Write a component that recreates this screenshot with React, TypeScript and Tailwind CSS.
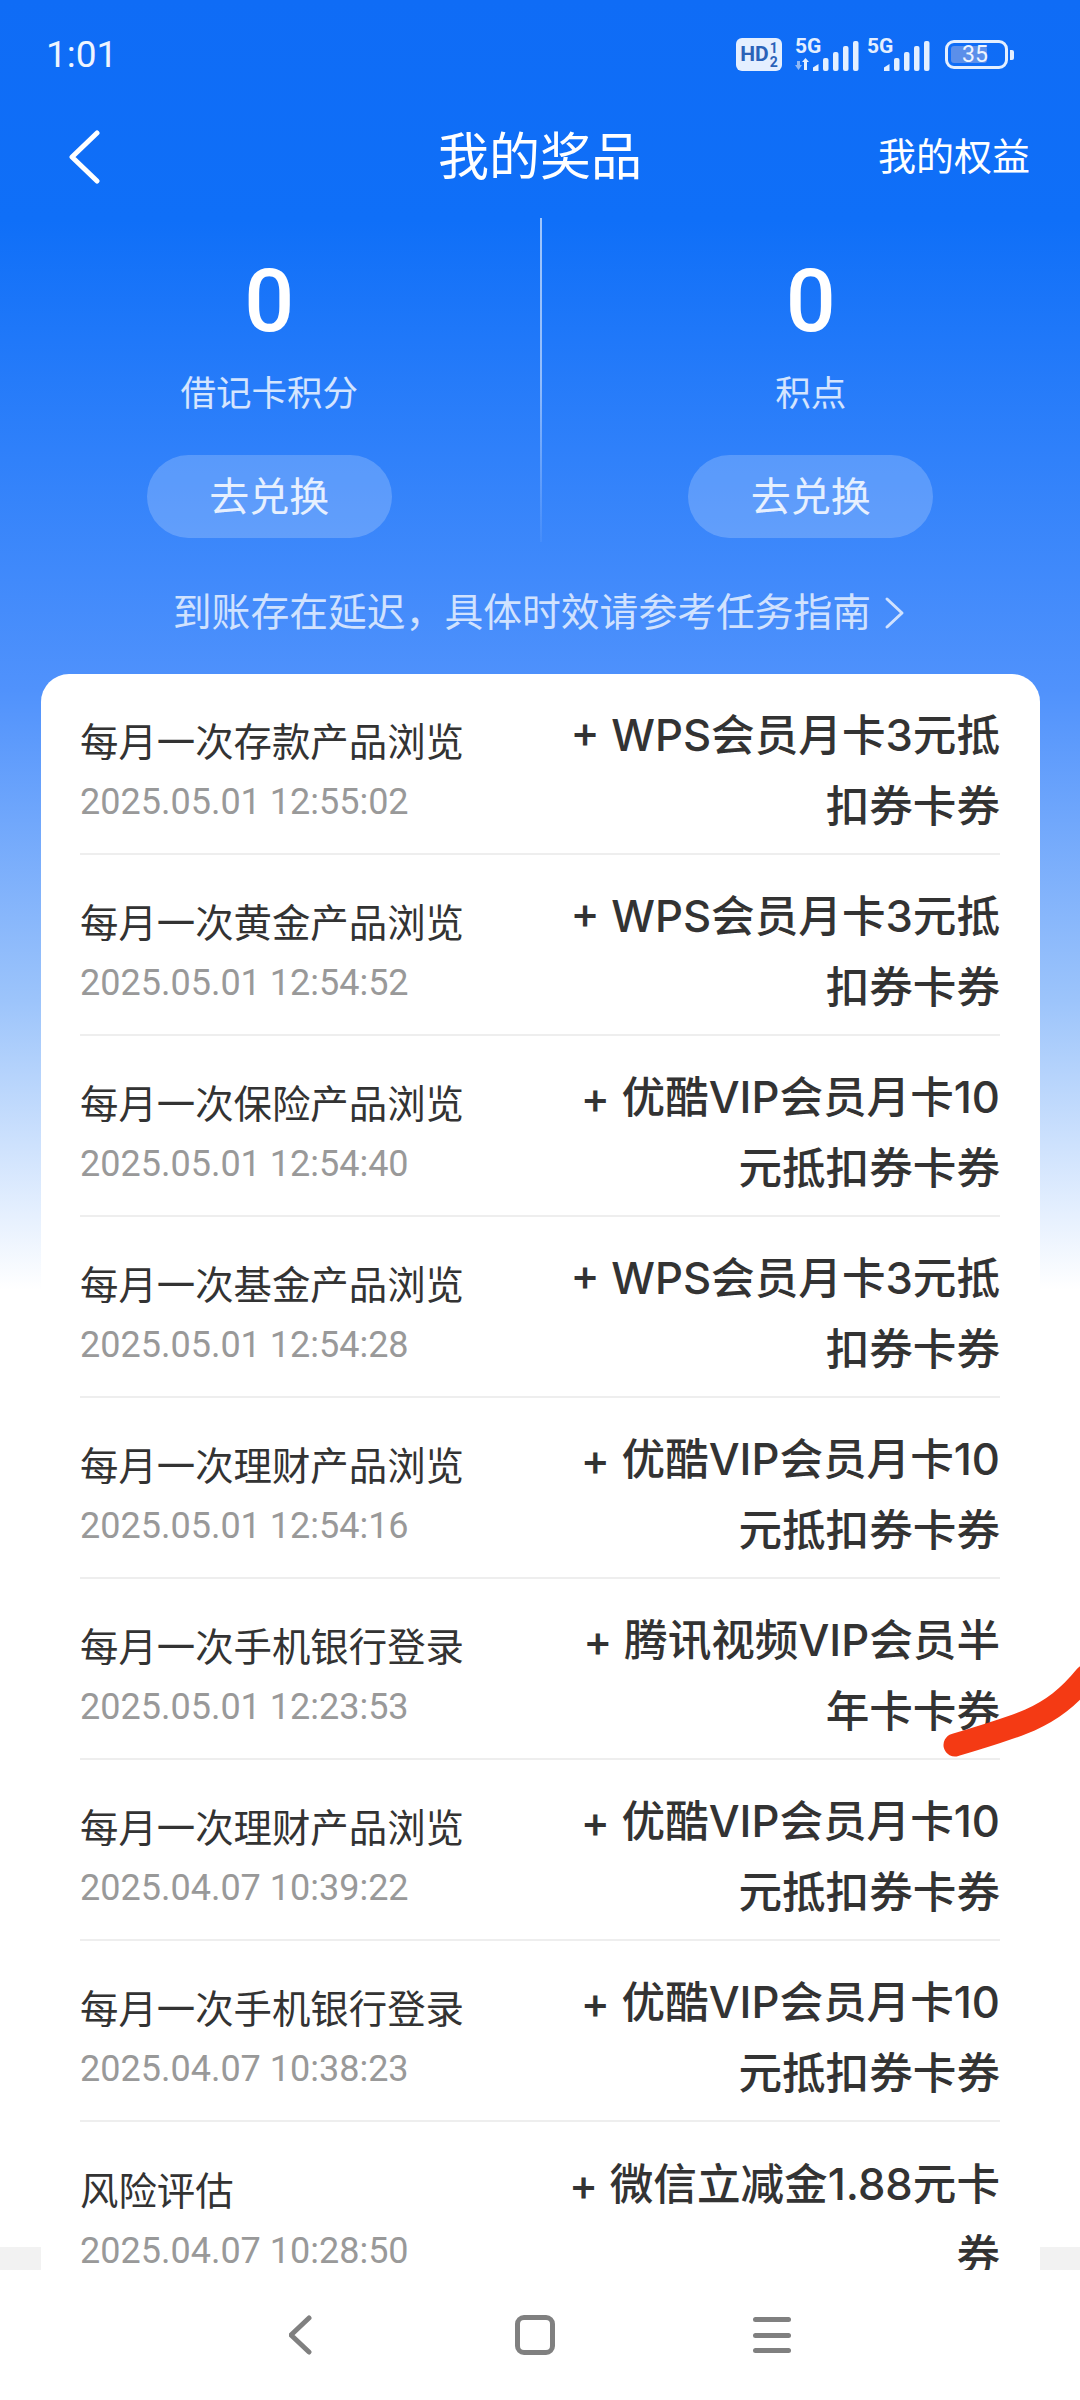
import React from 'react';

const FONT = "font-['Roboto','Noto_Sans_CJK_SC',sans-serif]";

interface PrizeRow {
  title: string;
  time: string;
  prize: string;
}

const WPS = '+ WPS会员月卡3元抵扣券卡券';
const YOUKU = '+ 优酷VIP会员月卡10元抵扣券卡券';

const ROWS: PrizeRow[] = [
  { title: '每月一次存款产品浏览', time: '2025.05.01 12:55:02', prize: WPS },
  { title: '每月一次黄金产品浏览', time: '2025.05.01 12:54:52', prize: WPS },
  { title: '每月一次保险产品浏览', time: '2025.05.01 12:54:40', prize: YOUKU },
  { title: '每月一次基金产品浏览', time: '2025.05.01 12:54:28', prize: WPS },
  { title: '每月一次理财产品浏览', time: '2025.05.01 12:54:16', prize: YOUKU },
  { title: '每月一次手机银行登录', time: '2025.05.01 12:23:53', prize: '+ 腾讯视频VIP会员半年卡卡券' },
  { title: '每月一次理财产品浏览', time: '2025.04.07 10:39:22', prize: YOUKU },
  { title: '每月一次手机银行登录', time: '2025.04.07 10:38:23', prize: YOUKU },
  { title: '风险评估', time: '2025.04.07 10:28:50', prize: '+ 微信立减金1.88元卡券' },
];

const Signal = ({ first }: { first: boolean }) => (
  <div className={`relative h-[33px] ${first ? 'w-[65px]' : 'w-[63px]'}`}>
    <span className="absolute left-0 top-[-1px] text-[21px] font-bold leading-[19px] text-[#e4efff]">5G</span>
    <svg className="absolute left-0 top-0" width="65" height="33" viewBox="0 0 65 33" fill="#e4efff">
      {first && (
        <>
          <path d="M2 23h3v4h2l-3.5 5L0 27h2z" fill="#8fb8f5" />
          <path d="M9 32V24l-2 0 3.5-4 3.5 4h-2v8z" />
        </>
      )}
      <g transform={first ? 'translate(0 0)' : 'translate(-1 0)'}>
        <path d="M18 33v-3.5l5.5-3.5V33z" />
        <rect x="28" y="20" width="5.5" height="13" rx="2" />
        <rect x="38" y="14" width="5.5" height="19" rx="2" />
        <rect x="48" y="8" width="5.5" height="25" rx="2" />
        <rect x="58" y="3" width="5.5" height="30" rx="2" />
      </g>
    </svg>
  </div>
);

const StatBlock = ({ label }: { label: string }) => (
  <div className="flex flex-1 flex-col items-center">
    <div className="mt-[31px] text-[88px] font-medium leading-[104px] text-white">0</div>
    <div className="mt-[17px] text-[35.5px] leading-[48px] text-white/80">{label}</div>
    <div className="mt-[37px] flex h-[83px] w-[245px] items-center justify-center rounded-full bg-white/20 pt-[2px] text-[40px] text-white/85">
      去兑换
    </div>
  </div>
);

const Row = ({ row, last }: { row: PrizeRow; last: boolean }) => (
  <div className={`flex h-[181px] items-center justify-between ${last ? '' : 'border-b-2 border-[#eeeeee]'}`}>
    <div className="mt-[17px] flex flex-col">
      <div className="text-[38.4px] leading-[60px] text-[#333333]">{row.title}</div>
      <div className="text-[36px] leading-[58px] text-[#999999]">{row.time}</div>
    </div>
    <div className="mt-[14px] w-[440px] text-right font-['Inter','Noto_Sans_CJK_SC',sans-serif] text-[43.6px] font-medium leading-[71px] text-[#333333]">
      {row.prize}
    </div>
  </div>
);

export default function App() {
  return (
    <div className={`relative flex h-[2400px] w-[1080px] flex-col overflow-hidden bg-white ${FONT}`}>
      <div className="flex h-[2270px] flex-col overflow-hidden bg-[linear-gradient(180deg,#0f6cf6_0px,#0f6ff8_220px,#5092fc_690px,#9cc4fb_1000px,#ffffff_1290px,#ffffff_2247px,#f2f2f2_2247px)]">
        {/* Status bar */}
        <div className="flex h-[104px] shrink-0 items-center justify-between pl-[46px] pr-[66px] pt-[5px] text-white">
          <span className="text-[37px] leading-none text-[#eef5ff]">1:01</span>
          <div className="flex items-center">
            <div className="flex h-[33px] w-[46px] items-center justify-center rounded-[6px] bg-[#e4efff] text-[21px] font-bold leading-none text-[#2a62b8]">
              HD<span className="ml-[1px] flex flex-col text-[14px] leading-[14px]"><span>1</span><span>2</span></span>
            </div>
            <div className="ml-[13px]"><Signal first /></div>
            <div className="ml-[7px]"><Signal first={false} /></div>
            <div className="ml-[15px] flex items-center">
              <div className="flex h-[29px] w-[63px] items-center rounded-[9px] border-[3px] border-[#e4efff] p-[3px]">
                <div className="flex h-full w-[36px] items-center rounded-[3px] bg-[#5b8fea] pl-[11px] text-[23px] leading-none text-[#eef5ff]">35</div>
              </div>
              <div className="ml-[2px] h-[10px] w-[4px] rounded-r-[2px] bg-[#e4efff]" />
            </div>
          </div>
        </div>

        {/* Nav */}
        <div className="mt-[2px] grid h-[102px] shrink-0 grid-cols-[1fr_auto_1fr] items-center px-[50px] text-white">
          <svg className="ml-[18px]" width="34" height="54" viewBox="0 0 34 54" fill="none" stroke="white" strokeWidth="5" strokeLinecap="round" strokeLinejoin="round">
            <path d="M29 3 4 27l25 24" />
          </svg>
          <div className="text-[51px] leading-none">我的奖品</div>
          <div className="text-right text-[38px] leading-none">我的权益</div>
        </div>

        {/* Stats */}
        <div className="mt-[10px] flex h-[324px] shrink-0">
          <StatBlock label="借记卡积分" />
          <div className="ml-[1px] h-full w-[2px] bg-gradient-to-b from-white/60 via-white/50 to-white/5" />
          <StatBlock label="积点" />
        </div>

        <div className="mt-[46px] flex h-[50px] shrink-0 items-center justify-center text-[38.8px] leading-none text-white/75">
          <span>到账存在延迟，具体时效请参考任务指南</span>
          <svg className="ml-[12px]" width="24" height="34" viewBox="0 0 24 34" fill="none" stroke="currentColor" strokeWidth="3" strokeLinecap="round" strokeLinejoin="round">
            <path d="M4 3 19 17 4 31" />
          </svg>
        </div>

        {/* List card */}
        <div className="ml-[41px] mr-[40px] mt-[36px] shrink-0 rounded-t-[28px] bg-white pl-[39px] pr-[40px]">
          {ROWS.map((row, idx) => (
            <Row key={idx} row={row} last={idx === ROWS.length - 1} />
          ))}
        </div>
      </div>

      {/* Bottom nav */}
      <div className="flex h-[130px] shrink-0 items-start justify-center bg-white pt-[45px]">
        <svg width="25" height="40" viewBox="0 0 25 40" fill="none" stroke="#808080" strokeWidth="5" strokeLinecap="round" strokeLinejoin="round">
          <path d="M20 3 2 20l18 17" />
        </svg>
        <div className="ml-[201px] mr-[198px] h-[40px] w-[40px] rounded-[9px] border-[5px] border-[#808080]" />
        <div className="flex h-[40px] w-[38px] flex-col justify-between py-[2px]">
          <div className="h-[5px] rounded-full bg-[#808080]" />
          <div className="h-[5px] rounded-full bg-[#808080]" />
          <div className="h-[5px] rounded-full bg-[#808080]" />
        </div>
      </div>

      {/* Red marker stroke on the screenshot */}
      <svg className="absolute left-0 top-0" width="1080" height="2400" viewBox="0 0 1080 2400" fill="none">
        <path d="M955 1745C985 1736 1012 1728 1030 1720C1052 1710 1068 1698 1086 1676" stroke="#f43a14" strokeWidth="23" strokeLinecap="round" />
      </svg>
    </div>
  );
}
